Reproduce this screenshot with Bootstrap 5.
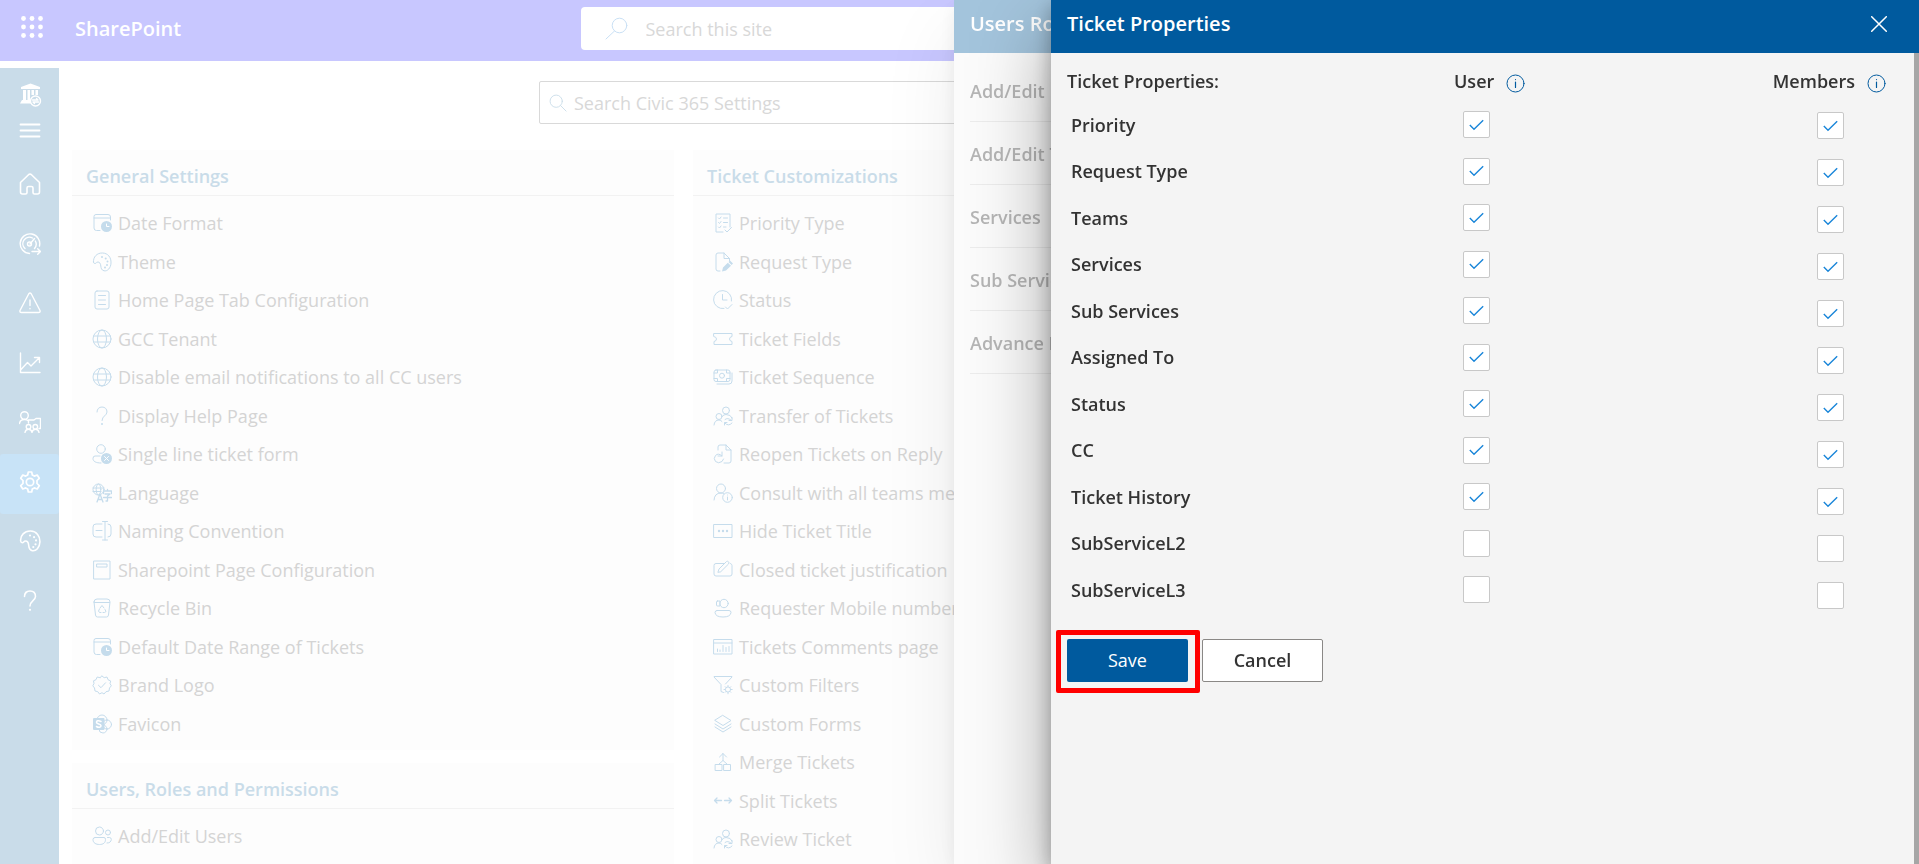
<!DOCTYPE html>
<html lang="en">
<head>
<meta charset="utf-8">
<meta name="viewport" content="width=device-width, initial-scale=1">
<title>Civic 365 Settings</title>
<link href="https://cdn.jsdelivr.net/npm/bootstrap@5.3.0/dist/css/bootstrap.min.css" rel="stylesheet">
<style>
  :root { --blue: #005a9e; --blue-faded: #c9dce9; --blue-mid: #a3c4dc; --grey-faded: #d4d4d4; }
  body { font-family: "Open Sans", "Noto Sans", sans-serif; font-size: 18px; line-height: 24px; color: #333; background: #fff; }
  a { color: inherit; text-decoration: none; }
  svg { fill: none; stroke: currentColor; stroke-linecap: round; stroke-linejoin: round; }
  .solid { fill: currentColor; stroke: none; }

  /* suite bar */
  .suite { height: 61px; background: #c8c7ff; color: #fff; margin-bottom: 7px; }
  .waffle { width: 22px; height: 22px; margin: 0 32px 7px 21px; }
  .brand-name { font-size: 20px; font-weight: 600; padding-bottom: 4px; }
  .suite-search { width: 758px; height: 43px; background: #fff; border-radius: 4px; color: #c9e0f5; padding-left: 24px; gap: 18px; top: 7px; left: 50%; translate: -50% 0; }
  .suite-search input, .find input { border: 0; background: transparent; outline: 0; padding: 0; color: #d4d4d4; }
  .suite-search input::placeholder, .find input::placeholder { color: #d8d8d8; opacity: 1; }

  /* left rail */
  .rail { width: 59px; background: var(--blue-faded); color: #fff; padding-top: 15px; }
  .rail svg { width: 22px; height: 22px; stroke-width: 1.4; }
  .rail a { height: 59px; padding-bottom: 5px; border-radius: 3px; }
  .rail li:nth-child(even) a { height: 60px; }
  .rail .active { background: #c8e3f7; }
  .rail .logo { height: 24px; margin-bottom: 12px; }
  .rail .logo svg { width: 24px; height: 24px; }
  .rail button { height: 24px; margin-bottom: 14px; color: #fff; }

  /* settings page */
  .find { width: 900px; height: 43px; margin: 13px auto 26px; border: 1px solid #d9d9d9; border-radius: 2px; color: var(--blue-faded); padding-left: 9px; gap: 7px; }
  .find svg { width: 18px; height: 18px; }
  .settings { display: grid; grid-template-columns: repeat(3, minmax(0, 1fr)); gap: 19px; padding: 0 3px 0 13px; align-items: start; }
  .group { background: #fdfdfd; margin-bottom: 13px; padding-bottom: 7px; }
  .group h2 { font-size: 18px; font-weight: 600; line-height: 24px; color: var(--blue-faded); margin: 0; padding: 14px 14px 7px; border-bottom: 1px solid #f2f2f2; }
  .group ul { padding: 8px 0 0 20px; margin: 0; }
  .group a { height: 38px; gap: 6px; color: var(--grey-faded); white-space: nowrap; }
  .group li:nth-child(even) a { height: 39px; }
  .group svg { width: 20px; height: 20px; color: #c5dcec; flex: none; }

  /* drawers */
  .drawer.offcanvas { border: 0; transition: none; max-width: 100%; outline: 0; }
  .drawer header { height: 53px; padding: 0 32px 6px 16px; color: #fff; flex: none; }
  .drawer header h2 { font-size: 20px; font-weight: 600; line-height: 28px; margin: 0; white-space: nowrap; }
  .drawer-back.offcanvas { --bs-offcanvas-width: 965px; background: #fbfbfb; color: #b5b5b5; box-shadow: 0 32px 72px rgba(0,0,0,.08), 0 6px 18px rgba(0,0,0,.07); z-index: 1045; }
  .drawer-back header { background: var(--blue-mid); }
  .drawer-back ul { margin: 6px 16px 0; padding: 0; font-weight: 600; }
  .drawer-back a { height: 63px; border-bottom: 1px solid #ececec; padding-top: 2px; }
  .drawer-front.offcanvas { --bs-offcanvas-width: 868px; background: #f4f4f4; color: #333; box-shadow: 0 32px 72px rgba(0,0,0,.35), 0 6px 18px rgba(0,0,0,.29); z-index: 1046; }
  .drawer-front header { background: var(--blue); }
  .close-x { width: 16px; height: 16px; color: #fff; }
  .panel-body { border-right: 5px solid #a6a6a6; padding: 8px 28px 0 16px; font-weight: 600; }
  .heading { height: 40px; gap: 12px; }
  .info { width: 19px; height: 19px; margin-top: 5px; color: var(--blue); }
  .info svg { display: block; width: 19px; height: 19px; }
  .name-col { width: 387px; }
  .heading .name-col { width: 375px; }
  .props li { height: 47px; }
  .props li:nth-child(even) { height: 46px; }
  .props li .name-col { padding-left: 4px; }
  .props li input { margin-left: 9px; }
  .members ul { padding-top: 1px; }
  .members li { height: 47px; padding-left: 44px; }
  .tick { appearance: none; width: 27px; height: 27px; margin: 0; border: 1px solid #c8c8c8; border-radius: 2px; background: #fff center / 15px 12px no-repeat; }
  .tick:checked { background-image: url("data:image/svg+xml,%3Csvg xmlns='http://www.w3.org/2000/svg' viewBox='0 0 15 12'%3E%3Cpath d='M.8 6 5 10.2 14.2 1.2' fill='none' stroke='%231a86d9' stroke-width='1.4'/%3E%3C/svg%3E"); }
  .actions { gap: 14px; padding-top: 26px; }
  .actions .btn { width: 121px; height: 43px; border-radius: 2px; padding: 0; font-size: 18px; }
  .btn-save { background: var(--blue); color: #fff; border: 0; }
  .btn-cancel { background: #fff; color: #333; border: 1px solid #8a8886; font-weight: 600; }
  .callout-box { inset: -9px -12px -11px -11px; border: 5px solid #f00; border-radius: 2px; pointer-events: none; }
</style>
</head>
<body class="vh-100 overflow-hidden d-flex flex-column">

<svg width="0" height="0" class="position-absolute" aria-hidden="true">
  <symbol id="i-datetime" viewBox="0 0 20 20"><path d="M8 17.500H4.500A2.500 2.500 0 0 1 2 15V3.500A2 2 0 0 1 4 1.500H16A2.500 2.500 0 0 1 18.500 4V7M2 5H18.500"/><circle class="solid" cx="14.500" cy="13.500" r="5.500"/><path stroke="#fff" d="M14.500 11V13.500H17"/></symbol>
  <symbol id="i-palette" viewBox="0 0 20 20"><path d="M1.500 10C1 5 5 .8 10.500 1 16 1.200 19.300 5.500 19 11 18.800 16 15.500 19.500 12 18.800 9.500 18.200 9 16 8.800 14 8.600 11.500 7.500 10 6 10 4 10 4.500 11.500 3 11.500 2 11.500 1.600 11 1.500 10Z"/><g class="solid"><circle cx="10" cy="5" r="1"/><circle cx="13.700" cy="6.500" r="1"/><circle cx="15.500" cy="9.500" r="1"/><circle cx="15" cy="13" r="1"/><circle cx="13" cy="15.500" r="1"/></g></symbol>
  <symbol id="i-page" viewBox="0 0 20 20"><rect x="3" y="1" width="14" height="18" rx="2"/><path d="M6.500 5.500H13.500M6.500 10H13.500M6.500 14.500H13.500"/></symbol>
  <symbol id="i-globe" viewBox="0 0 20 20"><circle cx="10" cy="10" r="9"/><ellipse cx="10" cy="10" rx="4.500" ry="9"/><path d="M1.500 7H18.500M1.500 13H18.500"/></symbol>
  <symbol id="i-help" viewBox="0 0 20 20"><path d="M5 6C5 3 7 1 10 1S15 3 15 6C15 9.500 10 10 10 14.500"/><circle class="solid" cx="10" cy="18" r="1"/></symbol>
  <symbol id="i-userx" viewBox="0 0 20 20"><circle cx="9" cy="5" r="4.300"/><path d="M8 12H3Q1 12 1 14.500C1 17.500 4 19 9 19"/><circle class="solid" cx="14.500" cy="14.500" r="5.500"/><path stroke="#fff" d="M12.500 12.500 16.500 16.500M16.500 12.500 12.500 16.500"/></symbol>
  <symbol id="i-lang" viewBox="0 0 20 20"><circle cx="6.500" cy="6.500" r="5.500"/><ellipse cx="6.500" cy="6.500" rx="2.300" ry="5.500"/><path d="M1 5H12M1 8.500H9"/><path stroke-width="1.300" d="M5 19 8 11 11 19M6 16.500H10M15.500 6.500V8M11.500 10.500V8H19.500V10.500M13 11H18L15.500 13V18H14M11.500 14.500H19.500"/></symbol>
  <symbol id="i-rename" viewBox="0 0 20 20"><path d="M10 3H4A3 3 0 0 0 1 6V13A3 3 0 0 0 4 16H10M16 3A3 3 0 0 1 19 6V13A3 3 0 0 1 16 16M13 .5V19M10.500 .5H15.500M10.500 19H15.500M4 9.500H10"/></symbol>
  <symbol id="i-sppage" viewBox="0 0 20 20"><path d="M2 1H18V19H2ZM5 4H15V7H5Z"/></symbol>
  <symbol id="i-bin" viewBox="0 0 20 20"><path d="M2 4 3.500 17Q3.700 19 5.500 19H14.500Q16.300 19 16.500 17L18 4Q18 1 15 1H5Q2 1 2 4ZM2.500 4.500H17.500M8 10 10 7.500 12 10M13 11.500 14 13.500 12.500 14.500H11M9 14.500H7.500L6.500 13 7.500 11"/></symbol>
  <symbol id="i-badge" viewBox="0 0 20 20"><path d="M10 1 12.200 2.700 15 2 16 4.700 18.700 6 18 8.500 19.300 10.800 17.500 13 17 16 14 16.700 12 19 10 17.700 7.500 19 5.800 16.700 3 16 2.500 13 .8 10.800 2 8.500 1.500 5.800 4 4.700 5.200 2 8 2.700ZM6.500 10.300 9 12.700 13.500 7.800"/></symbol>
  <symbol id="i-sp" viewBox="0 0 20 20"><circle cx="10" cy="6" r="5"/><circle cx="15" cy="10.500" r="4.500"/><circle cx="11" cy="15" r="4"/><rect class="solid" x="1" y="4" width="11.500" height="12" rx="1"/><path stroke="#fff" stroke-width="1.600" d="M9 7.500C6 6 4.500 7 4.500 8.300 4.500 10.300 9 9.500 9 11.700 9 13.300 6.500 13.800 4.500 12.500"/></symbol>
  <symbol id="i-users" viewBox="0 0 20 20"><circle cx="7.500" cy="5" r="4"/><path d="M3 11.500H12Q13.500 11.500 13.500 13.500C13.500 17 11 18.500 7.500 18.500S1 17 1 13.500Q1 11.500 3 11.500Z"/><circle cx="16" cy="6.500" r="2.500"/><path d="M15.500 11.500H17.500Q19.300 11.500 19.300 13.500 19 17 15 17"/></symbol>
  <symbol id="i-checklist" viewBox="0 0 20 20"><path d="M10 19H3V1H17V14M5.500 5 6.500 6 8 4M5.500 9.500 6.500 10.500 8 8.500M5.500 14 6.500 15 8 13M10.500 5H14.500M10.500 9.500H14.500M10.500 14H13M12 17 14 19 18.500 14.500"/></symbol>
  <symbol id="i-docedit" viewBox="0 0 20 20"><path d="M7 19H5Q3 19 3 17V3Q3 1 5 1H11L16.500 6.500V9M11 1V6.500H16.500"/><path class="solid" d="M9 19.500 10 15.500 14.800 10.700 18 13.800 13 18.500ZM15.500 10 17 8.500 20 11.500 18.600 13Z"/></symbol>
  <symbol id="i-clock" viewBox="0 0 20 20"><path d="M11 18.500A9 9 0 1 1 18.500 11M9.500 4.500V10H14M12.500 17 14.500 19 19 14.500"/></symbol>
  <symbol id="i-ticket" viewBox="0 0 20 20"><path d="M1 4.500H19V7.500Q16.500 8 16.500 10T19 12.500V15.500H1V12.500Q3.500 12 3.500 10T1 7.500Z"/></symbol>
  <symbol id="i-money" viewBox="0 0 20 20"><rect x="1" y="3" width="16" height="11.500" rx="2"/><circle cx="9" cy="8.700" r="2.500"/><path d="M4.500 3V6H1M13.500 3V6H17M4.500 14.500V11.500H1M13.500 14.500V11.500H17M19 6V14Q19 17 16 17H4"/></symbol>
  <symbol id="i-transfer" viewBox="0 0 20 20"><circle cx="13" cy="4.500" r="3.500"/><circle cx="6" cy="10.500" r="3"/><path d="M1 19Q1.500 14 6 14 8 14 9 15.500M9.500 10Q11 8.500 13 8.500 18 8.500 19 12M19 11.500V14.500H16M11.500 19V16.500H14M12 13.500Q14.500 11 18.500 14.500M19 17Q15.500 21 11.800 17"/></symbol>
  <symbol id="i-reopen" viewBox="0 0 20 20"><path d="M5 6V3Q5 1 7 1H13L18 6V17Q18 19 16 19H11M13 1V6H18M9 8V12H5M9 12Q5.500 8.500 2.500 11.500 0 14.500 2.500 17.500 5.500 20 9 17.500L10.500 15"/></symbol>
  <symbol id="i-userinfo" viewBox="0 0 20 20"><circle cx="8" cy="5.500" r="4.500"/><path d="M1 17Q1.500 10 8 10 9.500 10 10.500 10.500"/><circle cx="14.500" cy="14.500" r="4.800"/><path d="M14.500 14V17M14.500 12V12"/></symbol>
  <symbol id="i-dots" viewBox="0 0 20 20"><path d="M1 3.500H19V16.500H1Z"/><g class="solid"><circle cx="6" cy="10" r="1.200"/><circle cx="10" cy="10" r="1.200"/><circle cx="14" cy="10" r="1.200"/></g></symbol>
  <symbol id="i-edit" viewBox="0 0 20 20"><path d="M11 3.500H3Q1 3.500 1 5.500V14Q1 16 3 16H17Q19 16 19 14V5.500Q19 4 17.500 3.500M5 12 6 9 13.500 1.500Q14.500 .8 15.500 1.800T15.500 4L8 11.500Z"/></symbol>
  <symbol id="i-agent" viewBox="0 0 20 20"><circle cx="11" cy="5.500" r="4.200"/><path d="M4.500 3H7V8H4.500Q3.500 8 3.500 7V4Q3.500 3 4.500 3ZM4 12.500H16Q18 12.500 18 14.500 17.500 19 10 19T2 14.500Q2 12.500 4 12.500Z"/></symbol>
  <symbol id="i-report" viewBox="0 0 20 20"><path d="M1 2.500H19V17H1ZM1 6H19M4.500 14.500V12M7 14.500V13M10 14.500V8.500M13 14.500V10.500M16 14.500V9.500"/></symbol>
  <symbol id="i-filter" viewBox="0 0 20 20"><path d="M10.500 17.500 8 16.500V9.500L1 2V1.500H19V2L12.500 9"/><circle cx="15" cy="14.500" r="2.600"/><path d="M15 10.500V11.500M15 17.500V18.800M11 14.500H12M18 14.500H19.200M12.200 11.700 13 12.500M17 16.500 17.800 17.300M17.800 11.700 17 12.500M13 16.500 12.200 17.300"/></symbol>
  <symbol id="i-layers" viewBox="0 0 20 20"><path d="M10 1.500 18 6.500 10 11.500 2 6.500ZM2 10 10 15 18 10M2 13 10 18 18 13"/></symbol>
  <symbol id="i-merge" viewBox="0 0 20 20"><path d="M2.500 12.500H9V18.500H2.500ZM11 12.500H17.500V18.500H11ZM6 12 10 8.500 14 12M10 8.500V1.500M6.500 5 10 1.500 13.500 5"/></symbol>
  <symbol id="i-split" viewBox="0 0 20 20"><path stroke-width="1.300" d="M8.500 9.500H1.500M4 7 1.500 9.500 4 12M11.500 9.500H18.500M16 7 18.500 9.500 16 12"/></symbol>
  <symbol id="i-search" viewBox="0 0 20 20"><circle cx="8" cy="8" r="6.800"/><path d="M13 13 19 19"/></symbol>
</svg>

<header class="suite d-flex align-items-center position-relative flex-shrink-0">
  <svg class="waffle" viewBox="0 0 22 22" role="img" aria-label="App launcher"><g class="solid"><circle cx="2.500" cy="2.500" r="2.400"/><circle cx="11" cy="2.500" r="2.400"/><circle cx="19.500" cy="2.500" r="2.400"/><circle cx="2.500" cy="11" r="2.400"/><circle cx="11" cy="11" r="2.400"/><circle cx="19.500" cy="11" r="2.400"/><circle cx="2.500" cy="19.500" r="2.400"/><circle cx="11" cy="19.500" r="2.400"/><circle cx="19.500" cy="19.500" r="2.400"/></g></svg>
  <a href="#" class="brand-name">SharePoint</a>
  <label class="suite-search d-flex align-items-center position-absolute">
    <svg width="23" height="23" viewBox="0 0 23 23"><circle cx="14.500" cy="8.500" r="7.300"/><path d="M9.500 14 1 22"/></svg>
    <input class="flex-grow-1" type="search" placeholder="Search this site" aria-label="Search this site">
  </label>
</header>

<div class="d-flex flex-grow-1 overflow-hidden">
  <nav class="rail flex-shrink-0" aria-label="Main">
    <div class="logo d-flex justify-content-center">
      <svg viewBox="0 0 24 24"><path class="solid" d="M12.500 .5 22 4V6H3V4ZM5 7H8V17H5ZM9.500 7H12V17H9.500ZM13.500 7H16V12H13.500ZM17.500 7H20V12H17.500ZM4 17H13V20.500H2Z"/><circle cx="17.500" cy="18" r="5"/><path d="M14.500 17H20L18.500 15.500M20.500 19H15L16.500 20.500"/></svg>
    </div>
    <button class="btn border-0 p-0 w-100 d-flex justify-content-center align-items-center" type="button" aria-label="Menu"><svg viewBox="0 0 22 22"><path stroke-width="1.800" d="M1.500 4.500H20.500M1.500 10.500H20.500M1.500 16.500H20.500"/></svg></button>
    <ul class="list-unstyled m-0">
      <li><a href="#" aria-label="Home" class="d-flex justify-content-center align-items-center"><svg viewBox="0 0 22 22"><path stroke-width="1.600" d="M1.500 9.500 9.500 1.700Q11 .5 12.500 1.700L20.500 9.500V19Q20.500 21 18.500 21H15.500Q14 21 14 19.500V15Q14 13.500 12.500 13.500H9.500Q8 13.500 8 15V19.500Q8 21 6.500 21H3.500Q1.500 21 1.500 19Z"/></svg></a></li>
      <li><a href="#" aria-label="Dashboard" class="d-flex justify-content-center align-items-center"><svg viewBox="0 0 22 22"><path d="M10.500 20.500A9.800 9.800 0 1 1 20.500 13M6 15.500A6.500 6.500 0 0 1 13.500 5M16.300 8A6.500 6.500 0 0 1 15.500 15.500M11 11 15.500 5.500M13 18.500H21.500M18.700 15.700 21.500 18.500 18.700 21.300"/><circle cx="10.500" cy="11" r="2"/></svg></a></li>
      <li><a href="#" aria-label="Alerts" class="d-flex justify-content-center align-items-center"><svg viewBox="0 0 22 22"><path d="M9.800 1.700Q11 .3 12.200 1.700L21 18.500Q21.500 20.500 19.500 20.500H2.500Q.5 20.500 1 18.500ZM11 8V13.500M11 16.500V16.700"/></svg></a></li>
      <li><a href="#" aria-label="Reports" class="d-flex justify-content-center align-items-center"><svg viewBox="0 0 22 22"><path d="M1.500 1V20.500H21M2 17.500 8.500 10.500 12 14 20.500 5.500M15.500 5.500H20.500V10.500"/></svg></a></li>
      <li><a href="#" aria-label="Teams" class="d-flex justify-content-center align-items-center"><svg viewBox="0 0 22 22"><circle cx="5.500" cy="4.500" r="3.800"/><path d="M.5 12.500Q1 8.500 5.500 8.500 8 8.500 9.500 10M9.500 12V9H15L17 7.500H21.500V17.500H20M6 21.500Q6.500 18.300 9.500 18.300T13 21.500Q13.500 18.300 16.500 18.300T20 21.500"/><circle cx="9.500" cy="15.800" r="2.300"/><circle cx="16.300" cy="15.800" r="2.300"/></svg></a></li>
      <li><a href="#" aria-label="Settings" class="active d-flex justify-content-center align-items-center"><svg viewBox="0 0 22 22"><path stroke-width="1.700" d="M9.300 1H12.700L13.300 4 15.300 5.100 18.200 4 20.300 7.300 18 9.500V12.500L20.300 14.700 18.200 18 15.300 16.900 13.300 18 12.700 21H9.300L8.700 18 6.700 16.900 3.800 18 1.700 14.700 4 12.500V9.500L1.700 7.300 3.800 4 6.700 5.100 8.700 4Z"/><circle stroke-width="1.700" cx="11" cy="11" r="3.700"/></svg></a></li>
      <li><a href="#" aria-label="Theme" class="d-flex justify-content-center align-items-center"><svg><use href="#i-palette"/></svg></a></li>
      <li><a href="#" aria-label="Help" class="d-flex justify-content-center align-items-center"><svg><use href="#i-help"/></svg></a></li>
    </ul>
  </nav>

  <main class="flex-grow-1">
    <label class="find d-flex align-items-center">
      <svg><use href="#i-search"/></svg>
      <input class="flex-grow-1" type="search" placeholder="Search Civic 365 Settings" aria-label="Search Civic 365 Settings">
    </label>
    <div class="settings">
      <div>
        <section class="group">
          <h2>General Settings</h2>
          <ul class="list-unstyled">
            <li><a href="#" class="d-flex align-items-center"><svg><use href="#i-datetime"/></svg>Date Format</a></li>
            <li><a href="#" class="d-flex align-items-center"><svg><use href="#i-palette"/></svg>Theme</a></li>
            <li><a href="#" class="d-flex align-items-center"><svg><use href="#i-page"/></svg>Home Page Tab Configuration</a></li>
            <li><a href="#" class="d-flex align-items-center"><svg><use href="#i-globe"/></svg>GCC Tenant</a></li>
            <li><a href="#" class="d-flex align-items-center"><svg><use href="#i-globe"/></svg>Disable email notifications to all CC users</a></li>
            <li><a href="#" class="d-flex align-items-center"><svg><use href="#i-help"/></svg>Display Help Page</a></li>
            <li><a href="#" class="d-flex align-items-center"><svg><use href="#i-userx"/></svg>Single line ticket form</a></li>
            <li><a href="#" class="d-flex align-items-center"><svg><use href="#i-lang"/></svg>Language</a></li>
            <li><a href="#" class="d-flex align-items-center"><svg><use href="#i-rename"/></svg>Naming Convention</a></li>
            <li><a href="#" class="d-flex align-items-center"><svg><use href="#i-sppage"/></svg>Sharepoint Page Configuration</a></li>
            <li><a href="#" class="d-flex align-items-center"><svg><use href="#i-bin"/></svg>Recycle Bin</a></li>
            <li><a href="#" class="d-flex align-items-center"><svg><use href="#i-datetime"/></svg>Default Date Range of Tickets</a></li>
            <li><a href="#" class="d-flex align-items-center"><svg><use href="#i-badge"/></svg>Brand Logo</a></li>
            <li><a href="#" class="d-flex align-items-center"><svg><use href="#i-sp"/></svg>Favicon</a></li>
          </ul>
        </section>
        <section class="group">
          <h2>Users, Roles and Permissions</h2>
          <ul class="list-unstyled">
            <li><a href="#" class="d-flex align-items-center"><svg><use href="#i-users"/></svg>Add/Edit Users</a></li>
            <li><a href="#" class="d-flex align-items-center"><svg><use href="#i-users"/></svg>Add/Edit Teams</a></li>
          </ul>
        </section>
      </div>
      <section class="group">
        <h2>Ticket Customizations</h2>
        <ul class="list-unstyled">
          <li><a href="#" class="d-flex align-items-center"><svg><use href="#i-checklist"/></svg>Priority Type</a></li>
          <li><a href="#" class="d-flex align-items-center"><svg><use href="#i-docedit"/></svg>Request Type</a></li>
          <li><a href="#" class="d-flex align-items-center"><svg><use href="#i-clock"/></svg>Status</a></li>
          <li><a href="#" class="d-flex align-items-center"><svg><use href="#i-ticket"/></svg>Ticket Fields</a></li>
          <li><a href="#" class="d-flex align-items-center"><svg><use href="#i-money"/></svg>Ticket Sequence</a></li>
          <li><a href="#" class="d-flex align-items-center"><svg><use href="#i-transfer"/></svg>Transfer of Tickets</a></li>
          <li><a href="#" class="d-flex align-items-center"><svg><use href="#i-reopen"/></svg>Reopen Tickets on Reply</a></li>
          <li><a href="#" class="d-flex align-items-center"><svg><use href="#i-userinfo"/></svg>Consult with all teams members</a></li>
          <li><a href="#" class="d-flex align-items-center"><svg><use href="#i-dots"/></svg>Hide Ticket Title</a></li>
          <li><a href="#" class="d-flex align-items-center"><svg><use href="#i-edit"/></svg>Closed ticket justification</a></li>
          <li><a href="#" class="d-flex align-items-center"><svg><use href="#i-agent"/></svg>Requester Mobile number</a></li>
          <li><a href="#" class="d-flex align-items-center"><svg><use href="#i-report"/></svg>Tickets Comments page</a></li>
          <li><a href="#" class="d-flex align-items-center"><svg><use href="#i-filter"/></svg>Custom Filters</a></li>
          <li><a href="#" class="d-flex align-items-center"><svg><use href="#i-layers"/></svg>Custom Forms</a></li>
          <li><a href="#" class="d-flex align-items-center"><svg><use href="#i-merge"/></svg>Merge Tickets</a></li>
          <li><a href="#" class="d-flex align-items-center"><svg><use href="#i-split"/></svg>Split Tickets</a></li>
          <li><a href="#" class="d-flex align-items-center"><svg><use href="#i-transfer"/></svg>Review Ticket</a></li>
        </ul>
      </section>
    </div>
  </main>
</div>

<aside class="drawer drawer-back offcanvas offcanvas-end show" data-bs-backdrop="false" data-bs-scroll="true" aria-label="Users Roles and Permissions">
  <header class="d-flex align-items-center"><h2>Users Roles and Permissions</h2></header>
  <ul class="list-unstyled">
    <li><a href="#" class="d-flex align-items-center">Add/Edit Users</a></li>
    <li><a href="#" class="d-flex align-items-center">Add/Edit Teams</a></li>
    <li><a href="#" class="d-flex align-items-center">Services</a></li>
    <li><a href="#" class="d-flex align-items-center">Sub Services</a></li>
    <li><a href="#" class="d-flex align-items-center">Advance Permissions</a></li>
  </ul>
</aside>

<aside class="drawer drawer-front offcanvas offcanvas-end show" data-bs-backdrop="false" data-bs-scroll="true" aria-label="Ticket Properties">
  <header class="d-flex align-items-center justify-content-between">
    <h2>Ticket Properties</h2>
    <button class="btn border-0 p-0 d-flex close-x" type="button" aria-label="Close"><svg width="16" height="16" viewBox="0 0 16 16"><path stroke-width="1.500" d="M.7 .7 15.300 15.300M15.300 .7 .7 15.300"/></svg></button>
  </header>
  <form class="panel-body flex-grow-1">
    <div class="d-flex justify-content-between">
      <div class="props">
        <div class="heading d-flex align-items-center"><span class="name-col">Ticket Properties:</span><span>User</span><button type="button" class="btn border-0 p-0 info" aria-label="About User"><svg viewBox="0 0 19 19"><circle cx="9.500" cy="9.500" r="8.500"/><path d="M9.500 8V13.500M9.500 5.500V5.600" stroke-width="1.200"/></svg></button></div>
        <ul class="list-unstyled m-0">
          <li class="d-flex align-items-center"><label class="name-col" for="u1">Priority</label><input class="tick" type="checkbox" id="u1" checked></li>
          <li class="d-flex align-items-center"><label class="name-col" for="u2">Request Type</label><input class="tick" type="checkbox" id="u2" checked></li>
          <li class="d-flex align-items-center"><label class="name-col" for="u3">Teams</label><input class="tick" type="checkbox" id="u3" checked></li>
          <li class="d-flex align-items-center"><label class="name-col" for="u4">Services</label><input class="tick" type="checkbox" id="u4" checked></li>
          <li class="d-flex align-items-center"><label class="name-col" for="u5">Sub Services</label><input class="tick" type="checkbox" id="u5" checked></li>
          <li class="d-flex align-items-center"><label class="name-col" for="u6">Assigned To</label><input class="tick" type="checkbox" id="u6" checked></li>
          <li class="d-flex align-items-center"><label class="name-col" for="u7">Status</label><input class="tick" type="checkbox" id="u7" checked></li>
          <li class="d-flex align-items-center"><label class="name-col" for="u8">CC</label><input class="tick" type="checkbox" id="u8" checked></li>
          <li class="d-flex align-items-center"><label class="name-col" for="u9">Ticket History</label><input class="tick" type="checkbox" id="u9" checked></li>
          <li class="d-flex align-items-center"><label class="name-col" for="u10">SubServiceL2</label><input class="tick" type="checkbox" id="u10"></li>
          <li class="d-flex align-items-center"><label class="name-col" for="u11">SubServiceL3</label><input class="tick" type="checkbox" id="u11"></li>
        </ul>
        <div class="actions d-flex">
          <div class="position-relative">
            <button class="btn btn-save d-block" type="button">Save</button>
            <div class="callout-box position-absolute"></div>
          </div>
          <button class="btn btn-cancel" type="button">Cancel</button>
        </div>
      </div>
      <div class="members">
        <div class="heading d-flex align-items-center"><span>Members</span><button type="button" class="btn border-0 p-0 info" aria-label="About Members"><svg viewBox="0 0 19 19"><circle cx="9.500" cy="9.500" r="8.500"/><path d="M9.500 8V13.500M9.500 5.500V5.600" stroke-width="1.200"/></svg></button></div>
        <ul class="list-unstyled m-0">
          <li class="d-flex align-items-center"><input class="tick" type="checkbox" aria-label="Priority, members" checked></li>
          <li class="d-flex align-items-center"><input class="tick" type="checkbox" aria-label="Request Type, members" checked></li>
          <li class="d-flex align-items-center"><input class="tick" type="checkbox" aria-label="Teams, members" checked></li>
          <li class="d-flex align-items-center"><input class="tick" type="checkbox" aria-label="Services, members" checked></li>
          <li class="d-flex align-items-center"><input class="tick" type="checkbox" aria-label="Sub Services, members" checked></li>
          <li class="d-flex align-items-center"><input class="tick" type="checkbox" aria-label="Assigned To, members" checked></li>
          <li class="d-flex align-items-center"><input class="tick" type="checkbox" aria-label="Status, members" checked></li>
          <li class="d-flex align-items-center"><input class="tick" type="checkbox" aria-label="CC, members" checked></li>
          <li class="d-flex align-items-center"><input class="tick" type="checkbox" aria-label="Ticket History, members" checked></li>
          <li class="d-flex align-items-center"><input class="tick" type="checkbox" aria-label="SubServiceL2, members"></li>
          <li class="d-flex align-items-center"><input class="tick" type="checkbox" aria-label="SubServiceL3, members"></li>
        </ul>
      </div>
    </div>
  </form>
</aside>

<script src="https://cdn.jsdelivr.net/npm/bootstrap@5.3.0/dist/js/bootstrap.bundle.min.js"></script>
</body>
</html>
